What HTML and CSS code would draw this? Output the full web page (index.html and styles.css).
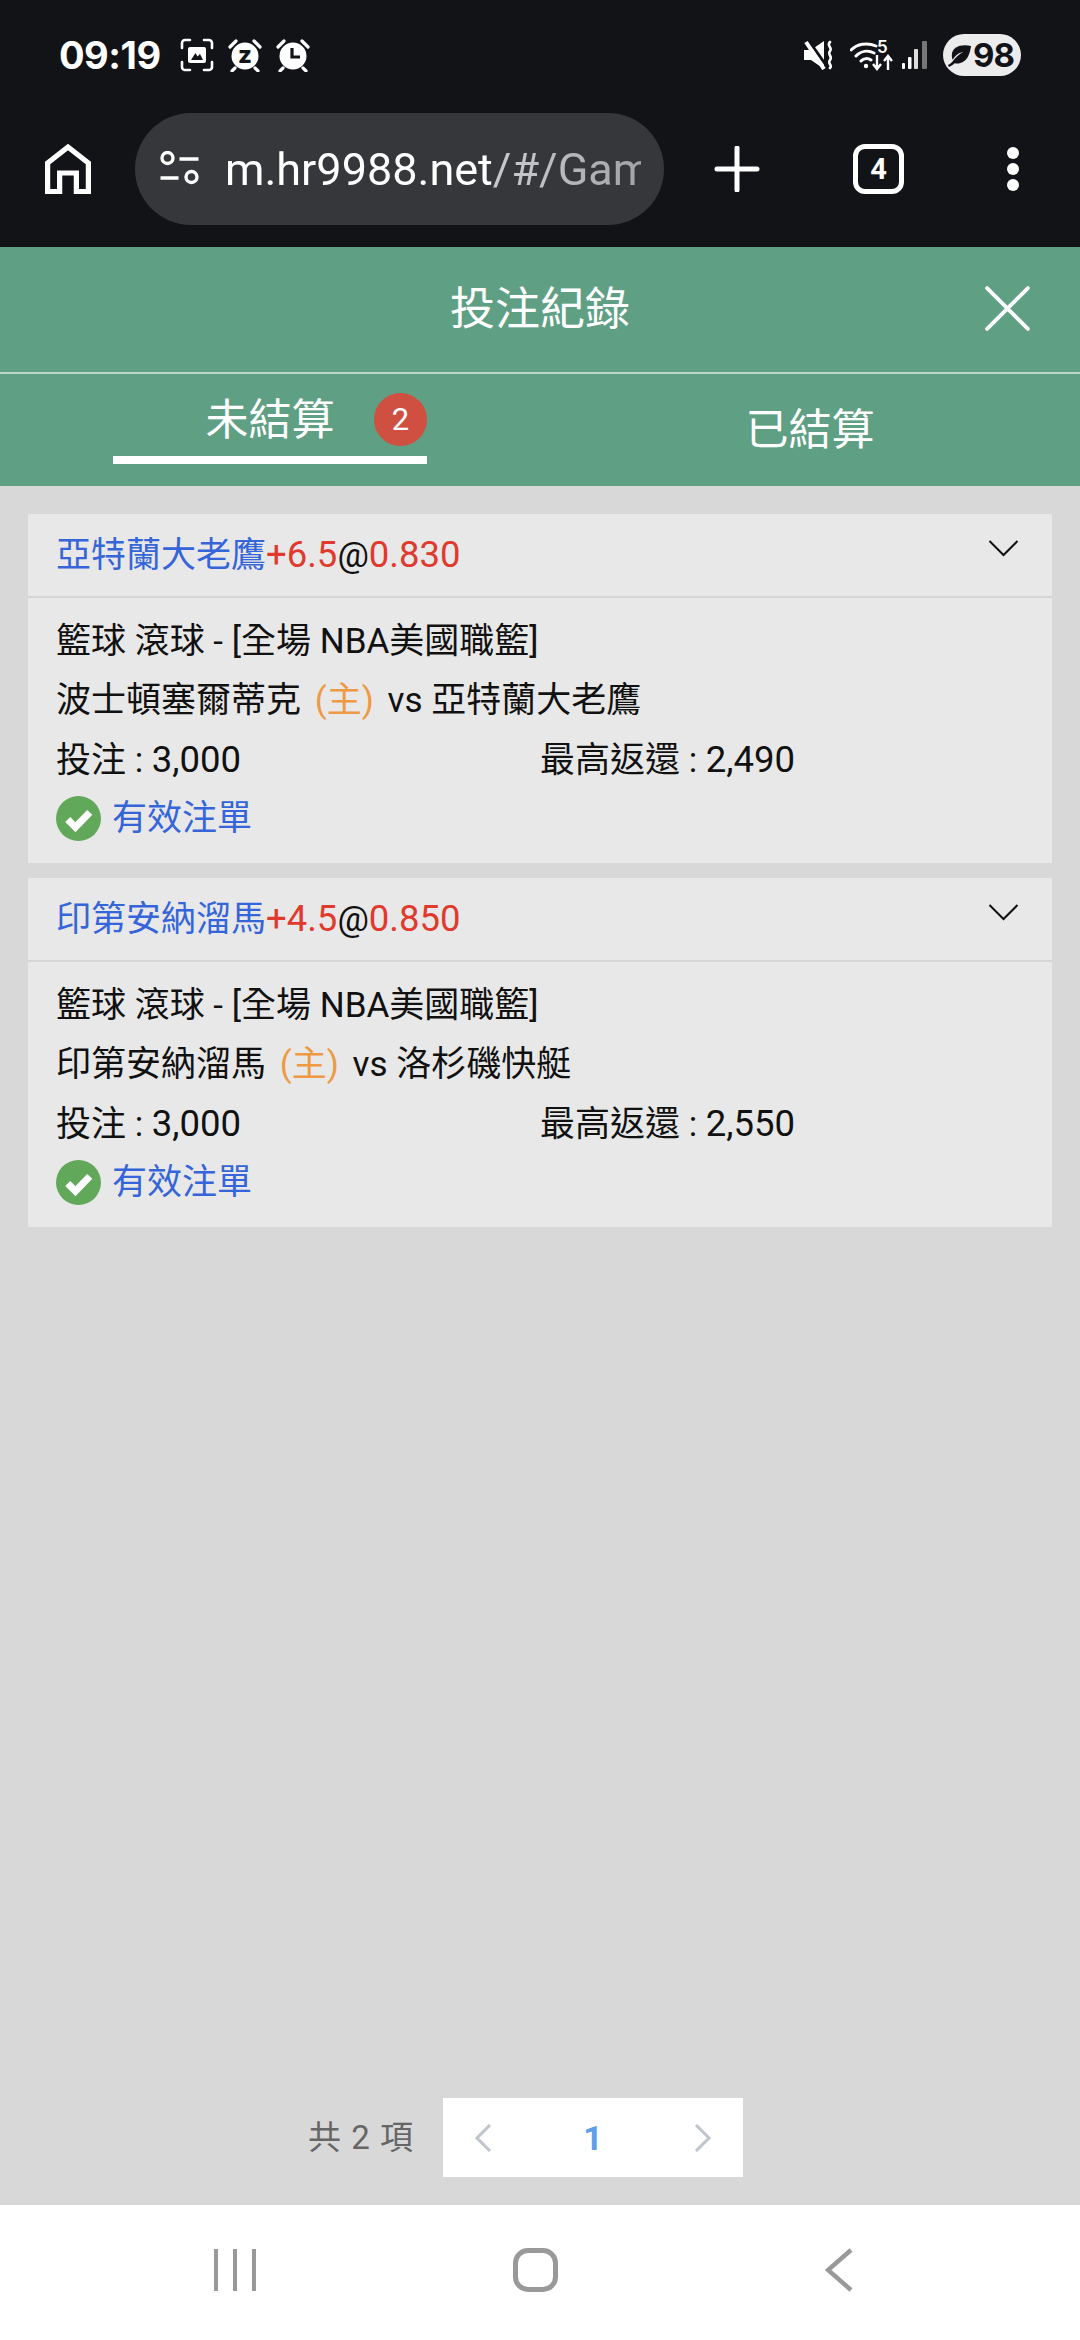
FILE: index.html
```html
<!DOCTYPE html>
<html lang="zh-Hant">
<head>
    <meta charset="UTF-8">
    <title>投注紀錄</title>
    <link rel="stylesheet" href="styles.css">
</head>
<body>
    <div class="chrome">
        <div class="status-bar">
            <div class="status-left">
                <span class="clock">09:19</span>
                <svg class="ic-capture" viewBox="0 0 34 34">
                    <path d="M2 10V5a3 3 0 0 1 3-3h5M24 2h5a3 3 0 0 1 3 3v5M32 24v5a3 3 0 0 1-3 3h-5M10 32H5a3 3 0 0 1-3-3v-5" fill="none" stroke="#fff" stroke-width="2.6" stroke-linecap="round"/>
                    <path fill-rule="evenodd" fill="#fff" d="M10 9h14a2 2 0 0 1 2 2v12a2 2 0 0 1-2 2H10a2 2 0 0 1-2-2V11a2 2 0 0 1 2-2zM11 22h12l-3-6-2.500 2.500-2-3.500z"/>
                </svg>
                <svg class="ic-alarm" viewBox="0 0 34 34">
                    <circle cx="17" cy="18" r="13.500" fill="#fff"/>
                    <path d="M2 9l6-6M32 9l-6-6M7 30l-3 3M27 30l3 3" stroke="#fff" stroke-width="3.200" stroke-linecap="round"/>
                    <text x="17" y="25" class="alarm-z">z</text>
                </svg>
                <svg class="ic-alarm" viewBox="0 0 34 34">
                    <circle cx="17" cy="18" r="13.500" fill="#fff"/>
                    <path d="M2 9l6-6M32 9l-6-6M7 30l-3 3M27 30l3 3" stroke="#fff" stroke-width="3.200" stroke-linecap="round"/>
                    <path d="M16 10v9h8" fill="none" stroke="#121317" stroke-width="3.200"/>
                </svg>
            </div>
            <div class="status-right">
                <svg class="ic-mute" viewBox="0 0 29 30">
                    <path fill="#fff" d="M0 10h7L20 1v28L7 20H0z"/>
                    <path d="M5 1l19 27" stroke="#121317" stroke-width="3"/>
                    <path d="M2 2l18 27" stroke="#fff" stroke-width="4"/>
                    <path d="M26 2c-4 4 3 5 0 9s3 5 0 9 3 5 0 8" fill="none" stroke="#fff" stroke-width="2.600" stroke-linecap="round"/>
                </svg>
                <svg class="ic-wifi" viewBox="0 0 43 32">
                    <path d="M1 11C7 5 17 3 26 7M6 17c5-5 12-6 18-3M11 22c3-3 7-3 10-1" fill="none" stroke="#fff" stroke-width="3" stroke-linecap="round"/>
                    <circle cx="16" cy="27" r="2.200" fill="#fff"/>
                    <text x="27" y="14" class="wifi-num">5</text>
                    <path d="M27 16v13M23 25l4 5 4-5M38 31V18M34 22l4-5 4 5" fill="none" stroke="#fff" stroke-width="2.400"/>
                </svg>
                <svg class="ic-signal" viewBox="0 0 27 30">
                    <rect x="0" y="23" width="3" height="6" rx="1" fill="#fff"/>
                    <rect x="6" y="17" width="3.500" height="12" rx="1" fill="#fff"/>
                    <rect x="12" y="9" width="4" height="20" rx="1" fill="#ddd"/>
                    <rect x="20" y="1" width="5" height="28" rx="1" fill="#777"/>
                </svg>
                <div class="battery">
                    <svg class="ic-leaf" viewBox="0 0 26 26">
                        <path fill="#121317" d="M25 3C14 1 5 4 5 13c0 2 .5 3.500 1 4.500C9 12 13 10 17 9c-5 3-9 7-11 10-1 1.500-3 3-5 4l1 2c2-1 4-2 6-4 2 .5 5 .5 8-1 6-3 8-10 9-17z"/>
                    </svg>
                    <span>98</span>
                </div>
            </div>
        </div>
        <div class="toolbar">
            <svg class="ic-home" viewBox="0 0 44 50" preserveAspectRatio="none">
                <path d="M2.500 47.500V19L22 3l19.500 16v28.500H30V29H14v18.500z" fill="none" stroke="#fff" stroke-width="5"/>
            </svg>
            <div class="url-bar">
                <svg class="ic-tune" viewBox="0 0 40 36">
                    <circle cx="8" cy="7" r="5.500" fill="none" stroke="#fff" stroke-width="3.400"/>
                    <path d="M20 8h19M1 27h18" stroke="#fff" stroke-width="3.600"/>
                    <circle cx="32" cy="26" r="5.500" fill="none" stroke="#fff" stroke-width="3.400"/>
                </svg>
                <div class="url-text">m.hr9988.net<span class="url-path">/#/Game</span></div>
            </div>
            <svg class="ic-plus" viewBox="0 0 44 46">
                <path d="M22 2v42M2 23h40" stroke="#fff" stroke-width="5" stroke-linecap="round"/>
            </svg>
            <div class="tab-count">4</div>
            <div class="menu-dots"><i></i><i></i><i></i></div>
        </div>
    </div>

    <div class="record-head">
        <div class="title-row">
            <h1>投注紀錄</h1>
            <svg class="ic-close" viewBox="0 0 43 43">
                <path d="M2 2l39 39M41 2L2 41" stroke="#fff" stroke-width="3.600" stroke-linecap="round"/>
            </svg>
        </div>
        <div class="tabs">
            <div class="tab tab-active">未結算<span class="badge">2</span></div>
            <div class="tab tab-other">已結算</div>
        </div>
    </div>

    <div class="content">
        <div class="bet-card">
            <div class="bet-head">
                <div class="bet-pick"><span class="team">亞特蘭大老鷹</span><span class="odds">+6.5</span>@<span class="odds">0.830</span></div>
                <svg class="ic-chevron" viewBox="0 0 30 17">
                    <path d="M1 1l14 14L29 1" fill="none" stroke="#111" stroke-width="2"/>
                </svg>
            </div>
            <div class="bet-body">
                <div class="line">籃球 滾球 - [全場 NBA美國職籃]</div>
                <div class="line">波士頓塞爾蒂克 <span class="home-tag">(主)</span> vs 亞特蘭大老鷹</div>
                <div class="line line-split"><span>投注 : <span class="num">3,000</span></span><span>最高返還 : <span class="num">2,490</span></span></div>
                <div class="line line-state">
                    <svg class="ic-check" viewBox="0 0 44 44">
                        <circle cx="22" cy="22" r="22" fill="#62a85a"/>
                        <path d="M11.500 23l7.500 7.500L33 16" fill="none" stroke="#fff" stroke-width="7"/>
                    </svg>
                    有效注單
                </div>
            </div>
        </div>

        <div class="bet-card">
            <div class="bet-head">
                <div class="bet-pick"><span class="team">印第安納溜馬</span><span class="odds">+4.5</span>@<span class="odds">0.850</span></div>
                <svg class="ic-chevron" viewBox="0 0 30 17">
                    <path d="M1 1l14 14L29 1" fill="none" stroke="#111" stroke-width="2"/>
                </svg>
            </div>
            <div class="bet-body">
                <div class="line">籃球 滾球 - [全場 NBA美國職籃]</div>
                <div class="line">印第安納溜馬 <span class="home-tag">(主)</span> vs 洛杉磯快艇</div>
                <div class="line line-split"><span>投注 : <span class="num">3,000</span></span><span>最高返還 : <span class="num">2,550</span></span></div>
                <div class="line line-state">
                    <svg class="ic-check" viewBox="0 0 44 44">
                        <circle cx="22" cy="22" r="22" fill="#62a85a"/>
                        <path d="M11.500 23l7.500 7.500L33 16" fill="none" stroke="#fff" stroke-width="7"/>
                    </svg>
                    有效注單
                </div>
            </div>
        </div>

        <div class="pager-row">
            <span class="pager-total">共 2 項</span>
            <div class="pager">
                <svg class="ic-page" viewBox="0 0 24 28"><path d="M19 1L6 14l13 13" fill="none" stroke="#c0c4cc" stroke-width="3"/></svg>
                <span class="pager-num">1</span>
                <svg class="ic-page" viewBox="0 0 24 28"><path d="M5 1l13 13L5 27" fill="none" stroke="#c0c4cc" stroke-width="3"/></svg>
            </div>
        </div>
    </div>

    <div class="nav-bar">
        <svg class="ic-recents" viewBox="0 0 42 42">
            <path d="M2 0v42M21 0v42M40 0v42" stroke="#999" stroke-width="4"/>
        </svg>
        <div class="nav-home"></div>
        <svg class="ic-back" viewBox="0 0 28 44">
            <path d="M26 2L3 22l23 20" fill="none" stroke="#999" stroke-width="4.500"/>
        </svg>
    </div>
</body>
</html>
```

FILE: styles.css
```css
* {
    box-sizing: border-box;
}

html, body {
    height: 100%;
}

body {
    margin: 0;
    display: flex;
    flex-direction: column;
    font-family: Roboto, "Noto Sans CJK TC", sans-serif;
    background-color: #d8d8d8;
    color: #111;
}

svg {
    display: block;
    flex: none;
}

/* phone status bar + browser toolbar */
.chrome {
    background-color: #121317;
    height: 247px;
    flex: none;
}

.status-bar {
    height: 110px;
    padding: 0 59px;
    display: flex;
    justify-content: space-between;
    align-items: center;
    color: #fff;
}

.status-left,
.status-right {
    display: flex;
    align-items: center;
}

.clock {
    font-family: Inter, sans-serif;
    font-size: 38px;
    font-weight: 700;
    letter-spacing: -0.5px;
    width: 101px;
    margin-right: 20px;
}

.ic-capture {
    width: 34px;
    height: 34px;
    margin-right: 14px;
}

.ic-alarm {
    width: 34px;
    height: 34px;
    margin-right: 14px;
}

.ic-alarm:last-child {
    margin-right: 0;
}

.alarm-z {
    font-family: Inter, sans-serif;
    font-size: 24px;
    font-weight: 800;
    text-anchor: middle;
    fill: #121317;
}

.wifi-num {
    font-family: Inter, sans-serif;
    font-size: 17px;
    font-weight: 600;
    fill: #fff;
}

.ic-mute {
    width: 29px;
    height: 30px;
    margin-right: 17px;
}

.ic-wifi {
    width: 43px;
    height: 32px;
    margin-right: 9px;
}

.ic-signal {
    width: 27px;
    height: 30px;
    margin-right: 14px;
}

.battery {
    width: 78px;
    height: 42px;
    border-radius: 21px;
    background-color: #ececec;
    color: #121317;
    display: flex;
    align-items: center;
    padding-left: 4px;
    font-family: Inter, sans-serif;
    font-size: 33px;
    font-weight: 700;
    letter-spacing: -1px;
}

.ic-leaf {
    width: 25px;
    height: 25px;
    margin-right: 1px;
}

.toolbar {
    height: 116px;
    padding: 2px 0 0 45px;
    display: flex;
    align-items: center;
}

.ic-home {
    width: 46px;
    height: 50px;
}

.url-bar {
    width: 529px;
    height: 112px;
    margin-left: 44px;
    padding: 0 23px 0 24px;
    border-radius: 56px;
    background-color: #36373b;
    display: flex;
    align-items: center;
    color: #fff;
}

.ic-tune {
    width: 41px;
    height: 36px;
    margin-right: 25px;
}

.url-text {
    flex: 1;
    min-width: 0;
    overflow: hidden;
    white-space: nowrap;
    font-size: 45px;
    -webkit-mask-image: linear-gradient(to right, #000 70%, rgba(0, 0, 0, 0.75) 100%);
    mask-image: linear-gradient(to right, #000 70%, rgba(0, 0, 0, 0.75) 100%);
}

.url-path {
    color: #c6c7ca;
}

.ic-plus {
    width: 46px;
    height: 46px;
    margin-left: 50px;
}

.tab-count {
    width: 51px;
    height: 50px;
    margin-left: 93px;
    border: 5px solid #fff;
    border-radius: 12px;
    color: #fff;
    font-size: 29px;
    font-weight: 700;
    line-height: 40px;
    text-align: center;
}

.menu-dots {
    width: 12px;
    margin-left: 103px;
    display: flex;
    flex-direction: column;
    gap: 4px;
}

.menu-dots i {
    display: block;
    width: 12px;
    height: 12px;
    border-radius: 50%;
    background-color: #fff;
}

/* green header */
.record-head {
    background-color: #5fa084;
    color: #fff;
    flex: none;
    height: 239px;
}

.title-row {
    height: 127px;
    border-bottom: 2px solid #bcd6ca;
    display: grid;
    grid-template-columns: 1fr auto 1fr;
    align-items: center;
    padding: 0 50px;
}

.title-row h1 {
    grid-column: 2;
    margin: 0;
    font-size: 45px;
    font-weight: 400;
    line-height: 60px;
}

.ic-close {
    grid-column: 3;
    justify-self: end;
    width: 45px;
    height: 45px;
    margin-bottom: 2px;
}

.tabs {
    display: flex;
    padding-left: 113px;
    font-size: 43px;
    line-height: 60px;
}

.tab {
    height: 90px;
    text-align: center;
}

.tab-active {
    position: relative;
    width: 314px;
    padding-top: 16px;
    border-bottom: 8px solid #fff;
}

.tab-other {
    flex: 1;
    margin-left: 113px;
    padding-top: 26px;
}

.badge {
    position: absolute;
    right: 0;
    top: 19px;
    width: 53px;
    height: 53px;
    border-radius: 50%;
    background-color: #cf4f41;
    font-size: 31px;
    line-height: 53px;
}

/* bet list */
.content {
    flex: 1;
    display: flex;
    flex-direction: column;
    padding: 28px 28px;
    gap: 15px;
}

.bet-card {
    background-color: #e8e8e8;
    font-size: 35px;
}

.bet-head {
    height: 84px;
    padding: 0 33px 0 28px;
    border-bottom: 2px solid #d6d6d6;
    display: flex;
    justify-content: space-between;
}

.bet-pick {
    line-height: 82px;
}

.team {
    color: #3565d8;
}

.odds {
    color: #e03a2e;
    font-size: 36.5px;
}

.num {
    font-size: 36.5px;
}

.ic-chevron {
    width: 31px;
    height: 17px;
    margin-top: 26px;
}

.bet-body {
    padding: 14px 28px 15px;
}

.line {
    height: 59px;
    line-height: 59px;
    white-space: nowrap;
}

.line-split {
    display: grid;
    grid-template-columns: 484px 1fr;
}

.home-tag {
    color: #ee9a44;
    margin: 0 5px;
}

.line-state {
    display: flex;
    align-items: center;
    gap: 11px;
    color: #3565d8;
    height: 59px;
}

.ic-check {
    width: 45px;
    height: 45px;
}

/* pagination */
.pager-row {
    margin-top: auto;
    margin-right: -28px;
    padding-right: 337px;
    display: flex;
    justify-content: flex-end;
    align-items: center;
    gap: 29px;
}

.pager-total {
    font-size: 33px;
    color: #666;
    letter-spacing: 1px;
    margin-bottom: 6px;
}

.pager {
    width: 300px;
    height: 79px;
    padding: 0 28px;
    background-color: #fff;
    display: flex;
    justify-content: space-between;
    align-items: center;
}

.ic-page {
    width: 24px;
    height: 28px;
}

.pager-num {
    font-size: 34px;
    font-weight: 700;
    color: #5f9ee8;
}

/* android nav bar */
.nav-bar {
    height: 135px;
    flex: none;
    background-color: #fff;
    display: grid;
    grid-template-columns: 1fr 1fr 1fr;
    align-items: center;
    justify-items: center;
}

.ic-recents {
    width: 42px;
    height: 42px;
    margin-left: 110px;
    margin-top: -5px;
}

.nav-home {
    width: 45px;
    height: 44px;
    border: 5px solid #999;
    border-radius: 15px;
    margin-right: 9px;
    margin-top: -5px;
}

.ic-back {
    width: 28px;
    height: 44px;
    margin-right: 122px;
    margin-top: -5px;
}
```
